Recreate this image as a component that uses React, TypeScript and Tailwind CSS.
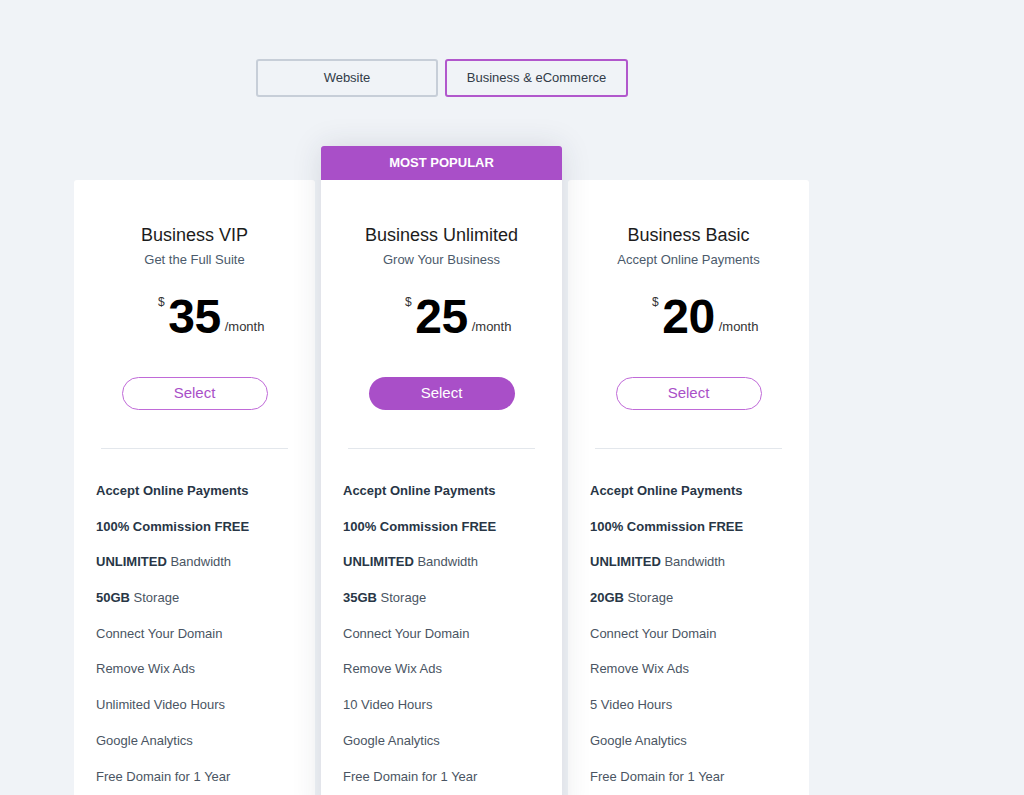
import React from "react";

type Plan = {
  name: string;
  tagline: string;
  price: string;
  popular?: boolean;
  storage: string;
  video: string;
};

const plans: Plan[] = [
  { name: "Business VIP", tagline: "Get the Full Suite", price: "35", storage: "50GB", video: "Unlimited Video Hours" },
  { name: "Business Unlimited", tagline: "Grow Your Business", price: "25", popular: true, storage: "35GB", video: "10 Video Hours" },
  { name: "Business Basic", tagline: "Accept Online Payments", price: "20", storage: "20GB", video: "5 Video Hours" },
];

function PlanCard({ plan }: { plan: Plan }) {
  return (
    <div
      className={`relative flex w-[241px] flex-col ${
        plan.popular ? "z-10 shadow-[0_0_28px_rgba(40,50,70,0.13)]" : ""
      }`}
    >
      {plan.popular ? (
        <div className="flex h-[34px] items-center justify-center rounded-t-[3px] bg-[#a94fc8] text-[13px] font-bold text-white">
          MOST POPULAR
        </div>
      ) : (
        <div className="h-[34px] bg-[#f0f3f7]" />
      )}
      <div className={`flex flex-1 flex-col bg-white ${plan.popular ? "" : "rounded-t-[3px]"}`}>
        <div className="pt-[43px] text-center text-[18px] leading-6 text-[#1c1c1c]">{plan.name}</div>
        <div className="mt-[4px] text-center text-[13px] leading-[18px] text-[#4b5a6b]">{plan.tagline}</div>

        <div className="mt-[20px] flex justify-center">
          <span className="relative text-[48px] font-bold leading-[56px] tracking-[-0.5px] text-black">
            {plan.price}
            <span className="absolute right-full top-[5px] mr-[4px] text-[12px] font-normal leading-4 text-[#333]">$</span>
            <span className="absolute bottom-[10px] left-full ml-[4px] text-[13px] font-normal leading-4 tracking-normal text-[#333]">
              /month
            </span>
          </span>
        </div>

        <div className="mt-[32px] flex justify-center">
          <button
            className={`h-[33px] w-[146px] rounded-full text-[15px] ${
              plan.popular
                ? "bg-[#a94fc8] text-white"
                : "border border-[#c06ad8] bg-white text-[#a94fc8]"
            }`}
          >
            Select
          </button>
        </div>

        <div className="mx-[27px] mt-[38px] h-px bg-[#e3e7ec]" />

        <ul className="mt-[33px] flex flex-col gap-[17.7px] px-[22px] pb-8 text-[13px] leading-[18px] text-[#4a5563]">
          <li className="font-bold text-[#283646]">Accept Online Payments</li>
          <li className="font-bold text-[#283646]">100% Commission FREE</li>
          <li>
            <span className="font-bold text-[#283646]">UNLIMITED</span> Bandwidth
          </li>
          <li>
            <span className="font-bold text-[#283646]">{plan.storage}</span> Storage
          </li>
          <li>Connect Your Domain</li>
          <li>Remove Wix Ads</li>
          <li>{plan.video}</li>
          <li>Google Analytics</li>
          <li>Free Domain for 1 Year</li>
        </ul>
      </div>
    </div>
  );
}

export default function App() {
  return (
    <div
      className="min-h-[795px] bg-[#f0f3f7] pt-[59px]"
      style={{ fontFamily: '"Liberation Sans", Arial, sans-serif' }}
    >
      <div className="ml-[74px] w-[735px]">
        <div className="flex justify-center gap-[7px] pl-[1px]">
          <button className="h-[38px] w-[182px] rounded-[3px] border-2 border-[#c7ced8] text-[13px] text-[#323c48]">
            Website
          </button>
          <button className="h-[38px] w-[183px] rounded-[3px] border-2 border-[#b157cc] text-[13px] text-[#323c48]">
            Business &amp; eCommerce
          </button>
        </div>

        <div className="mt-[49px] flex gap-[6px]">
          {plans.map((p) => (
            <PlanCard key={p.name} plan={p} />
          ))}
        </div>
      </div>
    </div>
  );
}
